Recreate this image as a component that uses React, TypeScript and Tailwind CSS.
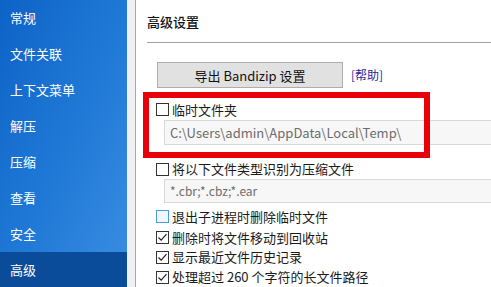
import React from 'react';

const NAV_ITEMS = ['常规', '文件关联', '上下文菜单', '解压', '压缩', '查看', '安全', '高级'];
const SELECTED = '高级';

const Check: React.FC<{ checked?: boolean; hot?: boolean }> = ({ checked, hot }) => (
    <span
        className={`flex h-[13px] w-[13px] shrink-0 items-center justify-center border ${
            hot ? 'border-[#4a9bd8] bg-[#eef7fd]' : 'border-[#333333] bg-white'
        }`}
    >
        {checked && (
            <svg width="11" height="11" viewBox="0 0 11 11">
                <path d="M1.5 5.5 L4.2 8.2 L9.5 2.2" fill="none" stroke="#222" strokeWidth="1.2" />
            </svg>
        )}
    </span>
);

const CheckRow: React.FC<{ label: string; checked?: boolean; hot?: boolean; className?: string }> = ({
    label,
    checked,
    hot,
    className,
}) => (
    <div className={`flex h-[20px] items-center gap-[3px] ${className ?? ''}`}>
        <Check checked={checked} hot={hot} />
        <span className="whitespace-nowrap text-[13px] text-[#1a1a1a]">{label}</span>
    </div>
);

const App: React.FC = () => {
    return (
        <div
            className="flex h-[287px] w-[491px] overflow-hidden bg-white"
            style={{ fontFamily: '"Noto Sans CJK SC", "Noto Sans", sans-serif' }}
        >
            {/* Sidebar */}
            <div className="flex w-[127px] shrink-0 flex-col bg-gradient-to-br from-[#0d63c6] via-[#1f78d6] to-[#3a8ee2]">
                {NAV_ITEMS.map((item) => (
                    <div
                        key={item}
                        className={`flex h-[36px] shrink-0 items-center pl-[10px] text-[13px] text-white ${
                            item === SELECTED ? 'bg-[#0a4c9a]' : ''
                        }`}
                    >
                        {item}
                    </div>
                ))}
            </div>
            <div className="w-[9px] shrink-0 border-r border-[#a8a8a8] bg-[#f0f0f0]" />

            {/* Panel */}
            <div className="relative flex min-w-0 flex-1 flex-col">
                <div className="ml-[11px] mt-[12px] text-[13px] font-medium text-[#111]">高级设置</div>
                <div className="ml-[11px] mt-[10px] h-px bg-[#a0a0a0]" />

                <div className="ml-[21px] mt-[20px] flex items-center gap-[8px]">
                    <button className="flex h-[26px] w-[186px] items-center justify-center border border-[#adadad] bg-[#e1e1e1] text-[13px] text-[#111]">
                        导出 Bandizip 设置
                    </button>
                    <span className="text-[12px] text-[#1c2a9a]">[帮助]</span>
                </div>

                <CheckRow className="ml-[20px] mt-[11px]" label="临时文件夹" />
                <div className="ml-[28px] mt-[1px] flex h-[25px] items-center border-y border-l border-[#d9d9d9] bg-[#f7f7f7] pl-[5px] text-[13px] text-[#6d6d6d]">
                    C:\Users\admin\AppData\Local\Temp\
                </div>

                <CheckRow className="ml-[20px] mt-[14px]" label="将以下文件类型识别为压缩文件" />
                <div className="ml-[28px] mt-[0px] flex h-[24px] items-center border-y border-l border-[#d9d9d9] bg-[#f7f7f7] pl-[5px] text-[12px] text-[#6d6d6d]">
                    *.cbr;*.cbz;*.ear
                </div>

                <CheckRow className="ml-[20px] mt-[4px]" label="退出子进程时删除临时文件" hot />
                <CheckRow className="ml-[20px] mt-px" label="删除时将文件移动到回收站" checked />
                <CheckRow className="ml-[20px]" label="显示最近文件历史记录" checked />
                <CheckRow className="ml-[20px]" label="处理超过 260 个字符的长文件路径" checked />

                {/* Red annotation box */}
                <div className="pointer-events-none absolute left-[7px] top-[92px] h-[66px] w-[287px] border-[6px] border-[#e8000b]" />
            </div>
        </div>
    );
};

export default App;
